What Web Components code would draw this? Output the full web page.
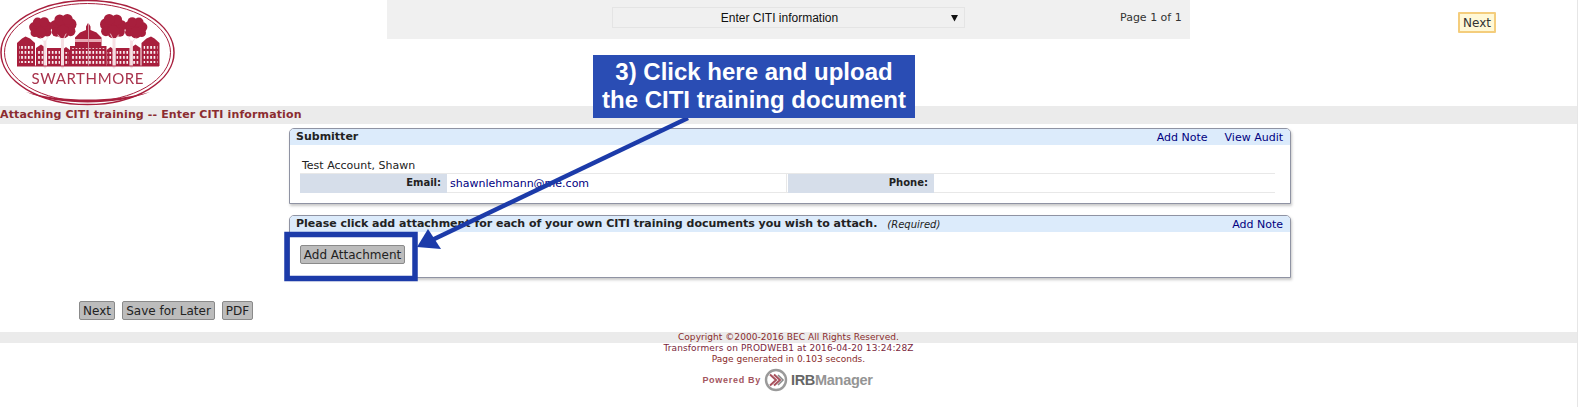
<!DOCTYPE html>
<html lang="en"><head><meta charset="utf-8"><title>Attaching CITI training</title>
<style>
html,body{margin:0;padding:0;background:#fff;overflow:hidden}
body{font:11px "DejaVu Sans",sans-serif;color:#222;width:1583px;height:407px;position:relative}
</style></head><body>
<x-page>
  <x-header>
    <x-logo slot="logo"></x-logo>
    <x-nav slot="nav"></x-nav>
    <x-btn slot="action" variant="hl">Next</x-btn>
  </x-header>
  <x-title>Attaching CITI training -- Enter CITI information</x-title>
  <x-panels>
    <x-panel height="76">
      <span slot="title">Submitter</span>
      <x-link slot="actions">Add Note</x-link>
      <x-link slot="actions">View Audit</x-link>
      <x-submitter name="Test Account, Shawn" email="shawnlehmann@me.com"></x-submitter>
    </x-panel>
    <x-panel height="63">
      <span slot="title" style="letter-spacing:-.015px">Please click add attachment for each of your own CITI training documents you wish to attach.</span>
      <span slot="note">(Required)</span>
      <x-link slot="actions">Add Note</x-link>
      <x-attach><x-btn wide>Add Attachment</x-btn></x-attach>
    </x-panel>
  </x-panels>
  <x-actions><x-btn>Next</x-btn><x-btn>Save for Later</x-btn><x-btn>PDF</x-btn></x-actions>
  <x-footer></x-footer>
</x-page>
<x-annotation></x-annotation>
<script>
function def(name, css, html, init){
  customElements.define(name, class extends HTMLElement{
    constructor(){super();const r=this.attachShadow({mode:'open'});r.innerHTML='<style>'+css+'</style>'+(typeof html==='function'?html(this):html);}
    connectedCallback(){ if(init) init(this); }
  });
}
def('x-page',':host{display:flex;flex-direction:column;width:1577px;height:407px;border-right:1px solid #e6e6e6;box-sizing:content-box}','<slot></slot>');
def('x-header',':host{display:grid;grid-template-columns:387px 803px 268px 38px;height:106px;align-items:start}::slotted([slot=action]){margin-top:12px}',
 '<slot name="logo"></slot><slot name="nav"></slot><span></span><slot name="action"></slot>');
def('x-nav',`:host{display:flex;height:39px;background:#f0f0f0;box-sizing:border-box;padding-top:7px;align-items:flex-start}
 .sel{margin-left:225px;width:353px;height:21px;box-sizing:border-box;border:1px solid #e4e4e4;display:flex;align-items:center;position:relative;font:12px "Liberation Sans",Arial,sans-serif;color:#111;justify-content:center;padding-right:18px}
 svg{position:absolute;right:5px;top:7px}
 .p{margin-left:155px;color:#333;font:11px "DejaVu Sans",sans-serif;line-height:22px;white-space:nowrap}`,
 '<div class="sel"><span>Enter CITI information</span><svg width="8" height="7" viewBox="0 0 8 7"><path d="M0 0H7L3.5 6.5Z" fill="#111"/></svg></div><div class="p">Page 1 of 1</div>');
def('x-title',':host{display:block;height:18px;background:#ebebeb;font:bold 11px/18px "DejaVu Sans",sans-serif;color:#8b2c30;white-space:nowrap;letter-spacing:.13px}','<slot></slot>');
def('x-panels',':host{display:flex;flex-direction:column;gap:11px;margin:4px 0 0 289px;width:1002px}','<slot></slot>');
def('x-panel',`:host{display:block;box-sizing:border-box;border:1px solid #8f93a3;border-radius:5px 5px 0 0;box-shadow:1px 2px 3px rgba(0,0,0,.22);background:#fff;overflow:hidden}
 .h{height:16px;background:#dcebfb;display:flex;align-items:center;padding:0 7px 0 6px;font:bold 11px/16px "DejaVu Sans",sans-serif;color:#222;white-space:nowrap}
 .n{font:italic 10px "DejaVu Sans",sans-serif;margin-left:10px;color:#222}
 .a{margin-left:auto;display:flex;gap:17px;font-weight:400}`,
 '<div class="h"><slot name="title"></slot><span class="n"><slot name="note"></slot></span><div class="a"><slot name="actions"></slot></div></div><slot></slot>',
 el=>{el.style.height=el.getAttribute('height')+'px'});
def('x-link',':host{color:#00007f;font:11px "DejaVu Sans",sans-serif}','<slot></slot>');
def('x-submitter',`:host{display:block;padding:12px 15px 0 10px;font:11px "DejaVu Sans",sans-serif;color:#222}
 .n{margin-left:2px;line-height:18px;height:16px}
 .r{display:grid;grid-template-columns:147px 340px 1px 146px 1fr;height:20px;box-sizing:border-box;border-top:1px solid #e8e8e8;border-bottom:1px solid #e8e8e8;line-height:19px}
 .l{background:#d6deea;text-align:right;padding-right:6px;font:bold 10px/18px "DejaVu Sans",sans-serif}
 .v{padding-left:3px;color:#00007f;border-right:1px solid #e8e8e8}`,
 el=>`<div class="n">${el.getAttribute('name')}</div><div class="r"><div class="l">Email:</div><div class="v">${el.getAttribute('email')}</div><span></span><div class="l">Phone:</div><div></div></div>`);
def('x-attach',':host{display:block;padding:13px 0 0 10px}','<slot></slot>');
def('x-btn',`:host{display:inline-flex;align-items:center;justify-content:center;box-sizing:border-box;height:19px;padding:0 3px;background:#bcbcbc;border:1px solid #8a8a8a;border-radius:2px;font:12px "DejaVu Sans",sans-serif;color:#222;white-space:nowrap}
 :host([variant=hl]){height:21px;width:38px;background:#fff8d6;border:2px solid #f4cd7c;border-radius:1px;padding:0;color:#333}
 :host([wide]){width:105px}`,'<slot></slot>');
def('x-actions',':host{display:flex;gap:7px;margin:23px 0 0 79px;height:19px}::slotted(:nth-child(1)){width:36px}::slotted(:nth-child(2)){width:93px}::slotted(:nth-child(3)){width:31px}','<slot></slot>');
def('x-footer',`:host{display:block;margin-top:12px;font:9px/11px "DejaVu Sans",sans-serif;color:#8a2b2b;text-align:center;position:relative}
 .c{width:1577px}
 .bar{height:11px;background:#ebebeb;letter-spacing:.05px}
 .m{color:#7a1f3c;letter-spacing:.12px}
 .lg{display:flex;justify-content:center;align-items:center;gap:3px;height:24px;margin-top:3px;margin-right:2px}
 .pw{font:bold 9px "Liberation Sans",Arial,sans-serif;color:#a35560;letter-spacing:.7px}
 .irb{font:bold 14.5px "Liberation Sans",Arial,sans-serif;letter-spacing:-.3px}
 .irb i{font-style:normal;color:#949494}
 .irb i:first-child{color:#666}`,
 `<div class="c"><div class="bar">Copyright ©2000-2016 BEC All Rights Reserved.</div><div class="m">Transformers on PRODWEB1 at 2016-04-20 13:24:28Z</div><div>Page generated in 0.103 seconds.</div>
 <div class="lg"><span class="pw">Powered By</span>
 <svg width="24" height="24" viewBox="0 0 24 24"><circle cx="12" cy="12" r="10" fill="#fff" stroke="#9a9a9a" stroke-width="2.4"/><path d="M6 6.5L12 12L6 17.5M10 6.5L16 12L10 17.5" fill="none" stroke="#a8525e" stroke-width="2"/><path d="M14 7L19 12L14 17" fill="none" stroke="#8a8a8a" stroke-width="1.6"/></svg>
 <span class="irb"><i>IRB</i><i>Manager</i></span></div></div>`);
const win=(x,y,w,h)=>`<rect x="${x}" y="${y}" width="${w}" height="${h}" fill="url(#w)"/>`;
const tree=(cx,cy,s)=>[[0,0,8],[-7,-2,5],[7,-3,5.5],[-3,-7,5],[4,-7.5,5],[-6,4,4.5],[7,3.5,4.5],[0,4,6]].map(c=>`<circle cx="${cx+c[0]*s}" cy="${cy+c[1]*s}" r="${c[2]*s}"/>`).join('');
const half=`
 <path d="M17 43L22 38.500L25.500 36.500L30 38.500L35 43V66H17Z"/>${win(19,44,14,19)}
 <path d="M36 48L41 44.500L46 48V66H36Z"/>${win(37.500,50,7,14)}
 <path d="M47 48H61V66H47Z"/>${win(48,50,12,14)}
 <path d="M62 50L66 47L70 50V66H62Z"/>${win(63,52,6,12)}
 <path d="M70 46H75V37.500L80 32.500L86 30V26.500L88 23V66H70Z"/>
 <rect x="75" y="39" width="13" height="3" fill="#e7a9b4"/>${win(71,48,17,16)}
 <g fill="#a81f3d">${tree(40.500,29,.95)}${tree(63,27.500,1.08)}</g>
 <g fill="none" stroke="#f6dfe3" stroke-linecap="round"><path d="M45 67V42" stroke-width="2.800"/><path d="M45 43L41 38M45 43L48 37" stroke-width=".8"/><path d="M62.500 67V40" stroke-width="3"/><path d="M62.500 41L58 35M62.500 41L66 34" stroke-width=".8"/></g>`;
def('x-logo',':host{display:block;width:176px;height:106px}svg{display:block;filter:blur(.35px)}',
 `<svg width="176" height="106" viewBox="0 0 176 106" role="img" aria-label="Swarthmore College logo">
 <defs><pattern id="w" width="3.400" height="5" patternUnits="userSpaceOnUse"><rect x=".8" y="1" width="1.600" height="2.800" fill="#fff"/></pattern></defs>
 <ellipse cx="87.500" cy="52.500" rx="86.500" ry="52" fill="#fff" stroke="#a81f3d" stroke-width="1.500"/>
 <ellipse cx="87.500" cy="52.500" rx="83" ry="49" fill="none" stroke="#a81f3d" stroke-width="1"/>
 <path d="M26 92C60 106 115 106 150 92C115 102 60 102 26 92Z" fill="#a81f3d"/>
 <g fill="#a81f3d"><g id="h">${half}</g><g transform="translate(176.500 0) scale(-1 1)">${half}</g>
 <rect x="17" y="65.500" width="142" height="1"/></g>
 <text x="31.500" y="84" font-family="Lato,'Liberation Sans',sans-serif" font-size="15" fill="#a8324c" textLength="112" lengthAdjust="spacing">SWARTHMORE</text>
 </svg>`);
def('x-annotation',`:host{position:absolute;left:0;top:0;width:1583px;height:407px;pointer-events:none}
 svg{position:absolute;left:0;top:0}
 .c{position:absolute;left:593px;top:55px;width:322px;height:63px;background:#2a4db4;color:#fff;font:bold 24px/28px "Liberation Sans",Arial,sans-serif;text-align:center;padding-top:3px;box-sizing:border-box;white-space:nowrap}`,
 `<svg width="1583" height="407"><path d="M688 118L430 241" stroke="#1c3ba9" stroke-width="4.500"/><path d="M417 247L428 229L441 249Z" fill="#1c3ba9"/><rect x="287" y="234.500" width="128" height="44" fill="none" stroke="#1c3ba9" stroke-width="5.500"/></svg>
 <div class="c">3) Click here and upload<br>the CITI training document</div>`);
</script>
</body></html>
